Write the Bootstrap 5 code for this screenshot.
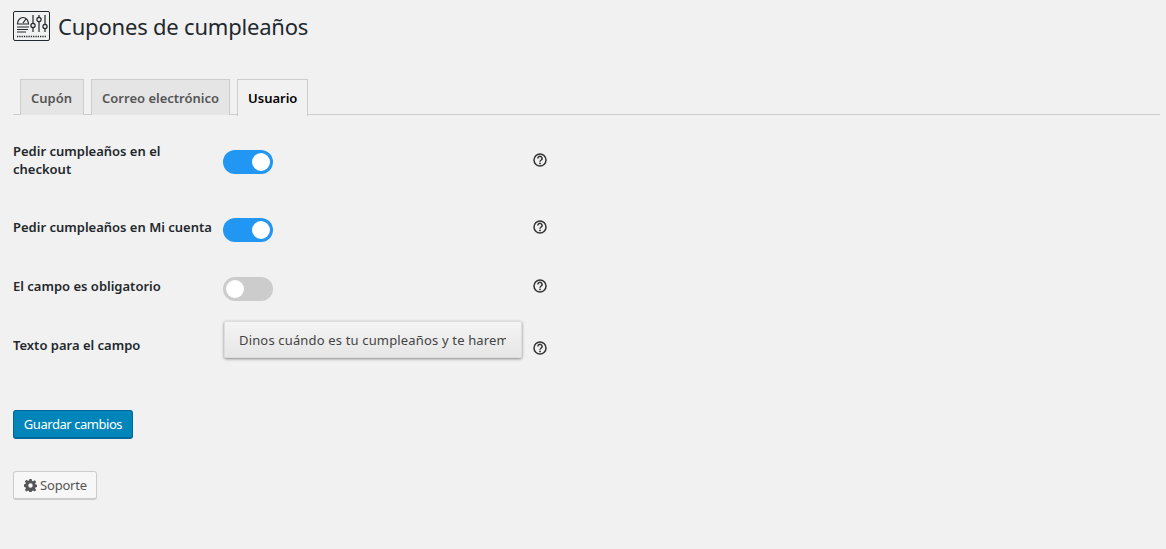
<!DOCTYPE html>
<html lang="es">
<head>
    <meta charset="UTF-8">
    <meta name="viewport" content="width=device-width, initial-scale=1.0">
    <title>Cupones de cumpleaños</title>
    <link href="https://cdn.jsdelivr.net/npm/bootstrap@5.3.0/dist/css/bootstrap.min.css" rel="stylesheet">
    <style>
        body {
            background-color: #f1f1f1;
            color: #23282d;
            font-family: "Noto Sans", "Open Sans", sans-serif;
            font-size: 13px;
            height: 549px;
            overflow: hidden;
        }

        .page-wrap {
            padding: 11px 6px 0 13px;
        }

        .title-bar {
            height: 30px;
        }

        .page-title {
            font-size: 22px;
            font-weight: 400;
            line-height: 30px;
            margin: 0;
            letter-spacing: -.2px;
        }

        .wp-tabs {
            margin-top: 38px;
            padding-left: 7px;
            border-bottom: 1px solid #ccc;
            gap: 7px;
            height: 36px;
        }

        .wp-tab {
            height: 36px;
            padding: 0 10px;
            border: 1px solid #ccc;
            border-bottom: 0;
            background: #e5e5e5;
            color: #555;
            font-weight: 600;
            font-size: 13px;
            line-height: 36px;
            text-decoration: none;
        }

        .wp-tab:first-child {
            padding-right: 11px;
        }

        .wp-tab.is-active {
            height: 37px;
            background: #f1f1f1;
            color: #000;
        }

        .set-row {
            display: flex;
            align-items: flex-start;
        }

        .set-label {
            width: 210px;
            padding-right: 8px;
            font-weight: 600;
            line-height: 18px;
            flex: none;
        }

        .set-field {
            width: 310px;
            flex: none;
        }

        .row-a { margin-top: 27px; height: 76px; }
        .row-b { height: 59px; }
        .row-c { height: 44px; }
        .row-d { height: 89px; }

        .row-a .set-field { padding-top: 8px; }
        .row-a .help-mark { margin-top: 11px; }
        .row-d .set-label { padding-top: 15px; }
        .row-d .set-field { padding-left: 1px; }
        .row-d .help-mark { margin-top: 20px; }

        .slide-toggle {
            display: block;
            width: 50px;
            height: 24px;
            border-radius: 12px;
            background: #2196f3;
            position: relative;
        }

        .slide-toggle::after {
            content: "";
            position: absolute;
            top: 3px;
            right: 3px;
            width: 18px;
            height: 18px;
            border-radius: 50%;
            background: #fff;
        }

        .slide-toggle.is-off {
            background: #ccc;
        }

        .slide-toggle.is-off::after {
            right: auto;
            left: 3px;
        }

        .help-mark {
            display: block;
            width: 14px;
            height: 14px;
            flex: none;
            margin-top: 2px;
        }

        .text-pill {
            width: 298px;
            height: 37px;
            padding: 0 15px 0 14px;
            border: 1px solid #ddd;
            border-radius: 2px;
            background: linear-gradient(#f4f4f4, #e6e6e6);
            box-shadow: 0 1px 3px rgba(0, 0, 0, .45);
            color: #444;
        }

        .text-clip {
            line-height: 37px;
            white-space: nowrap;
            overflow: hidden;
            letter-spacing: .16px;
        }

        .save-btn {
            display: block;
            width: 120px;
            height: 29px;
            padding: 0;
            background: #0085ba;
            border: 1px solid #006799;
            border-bottom-width: 2px;
            border-radius: 3px;
            color: #fff;
            font-size: 13px;
            line-height: 26px;
            letter-spacing: -.45px;
        }

        .support-btn {
            width: 84px;
            height: 29px;
            margin-top: 32px;
            padding: 0 0 0 1px;
            background: #f7f7f7;
            border: 1px solid #ccc;
            border-bottom-width: 2px;
            border-radius: 3px;
            color: #555;
            font-size: 13px;
            line-height: 26px;
            gap: 3px;
            letter-spacing: -.2px;
        }
    </style>
</head>

<body>
    <div class="page-wrap">
        <div class="title-bar d-flex align-items-center gap-2">
            <!-- settings logo -->
            <svg width="37" height="30" viewBox="0 0 37 30" fill="none" stroke="#23282d">
                <rect x=".5" y=".5" width="36" height="29" rx="1.500"/>
                <path d="M4.500 13a5.500 6.500 0 0 1 11 0z M10 12l3-4" stroke-width="1.200"/>
                <path d="M4 16h12 M4 18.500h11 M4 21h9" stroke-width="1"/>
                <path d="M20 4v8 M20 17v4 M26 4v2 M26 11v10 M32 4v9 M32 18v3" stroke-width="1.200"/>
                <circle cx="20" cy="14.500" r="2.100" stroke-width="1.200"/>
                <circle cx="26" cy="8.500" r="2.100" stroke-width="1.200"/>
                <circle cx="32" cy="15.500" r="2.100" stroke-width="1.200"/>
                <path d="M4 25.500h29" stroke-width="1.600" stroke-dasharray="1.300 1"/>
            </svg>
            <h1 class="page-title">Cupones de cumpleaños</h1>
        </div>

        <nav class="wp-tabs d-flex">
            <a href="#" class="wp-tab">Cupón</a>
            <a href="#" class="wp-tab">Correo electrónico</a>
            <a href="#" class="wp-tab is-active">Usuario</a>
        </nav>

        <form>
            <div class="set-row row-a">
                <div class="set-label">Pedir cumpleaños en el checkout</div>
                <div class="set-field"><span class="slide-toggle"></span></div>
                <svg class="help-mark" viewBox="0 0 14 14"><circle cx="7" cy="7" r="6" fill="none" stroke="#333" stroke-width="1.500"/><path d="M4.900 5.400a2.100 2 0 1 1 3.300 1.600c-.8.6-1.200.9-1.200 1.700" fill="none" stroke="#333" stroke-width="1.500"/><circle cx="7" cy="10.400" r=".9" fill="#333"/></svg>
            </div>
            <div class="set-row row-b">
                <div class="set-label">Pedir cumpleaños en Mi cuenta</div>
                <div class="set-field"><span class="slide-toggle"></span></div>
                <svg class="help-mark" viewBox="0 0 14 14"><circle cx="7" cy="7" r="6" fill="none" stroke="#333" stroke-width="1.500"/><path d="M4.900 5.400a2.100 2 0 1 1 3.300 1.600c-.8.6-1.200.9-1.200 1.700" fill="none" stroke="#333" stroke-width="1.500"/><circle cx="7" cy="10.400" r=".9" fill="#333"/></svg>
            </div>
            <div class="set-row row-c">
                <div class="set-label">El campo es obligatorio</div>
                <div class="set-field"><span class="slide-toggle is-off"></span></div>
                <svg class="help-mark" viewBox="0 0 14 14"><circle cx="7" cy="7" r="6" fill="none" stroke="#333" stroke-width="1.500"/><path d="M4.900 5.400a2.100 2 0 1 1 3.300 1.600c-.8.6-1.200.9-1.200 1.700" fill="none" stroke="#333" stroke-width="1.500"/><circle cx="7" cy="10.400" r=".9" fill="#333"/></svg>
            </div>
            <div class="set-row row-d">
                <div class="set-label">Texto para el campo</div>
                <div class="set-field"><div class="text-pill"><div class="text-clip">Dinos cuándo es tu cumpleaños y te haremos un regalo</div></div></div>
                <svg class="help-mark" viewBox="0 0 14 14"><circle cx="7" cy="7" r="6" fill="none" stroke="#333" stroke-width="1.500"/><path d="M4.900 5.400a2.100 2 0 1 1 3.300 1.600c-.8.6-1.200.9-1.200 1.700" fill="none" stroke="#333" stroke-width="1.500"/><circle cx="7" cy="10.400" r=".9" fill="#333"/></svg>
            </div>
            <button type="button" class="btn save-btn">Guardar cambios</button>
            <button type="button" class="btn support-btn d-flex align-items-center justify-content-center">
                <svg width="13" height="13" viewBox="0 0 16 16"><path fill="#555" d="M9.400 0l.4 2.200 1.300.6 1.900-1.300 2 2-1.300 1.900.6 1.300 2.200.4v2.800l-2.200.4-.6 1.300 1.300 1.900-2 2-1.900-1.300-1.300.6-.4 2.200H6.600l-.4-2.200-1.300-.6-1.900 1.300-2-2 1.300-1.900-.6-1.300L-.5 9.400V6.600l2.200-.4.6-1.300L1 3l2-2 1.900 1.300 1.300-.6L6.600 0zM8 5.300a2.700 2.700 0 1 0 0 5.400 2.700 2.700 0 0 0 0-5.400z"/></svg>
                Soporte
            </button>
        </form>
    </div>
</body>

</html>
